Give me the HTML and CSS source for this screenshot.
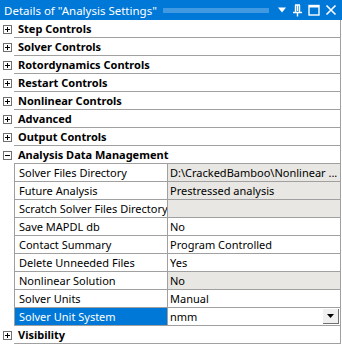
FILE: index.html
```html
<!DOCTYPE html>
<html>
<head>
<meta charset="utf-8">
<link rel="stylesheet" href="styles.css">
</head>
<body>
<div class="panel">
  <div class="titlebar">
    <span class="title">Details of "Analysis Settings"</span>
    <span class="grip"></span>
    <span class="tb-icons">
      <svg width="10" height="6" viewBox="0 0 10 6"><path d="M1 0.5h8l-4 5z" fill="#fff"/></svg>
      <svg width="11" height="13" viewBox="0 0 11 13"><path d="M3 1h5M3.5 1v7M7.5 1v7M5.5 1v6M1 8.5h9M5.5 8.5v4" stroke="#fff" stroke-width="1.4" fill="none"/></svg>
      <svg width="12" height="12" viewBox="0 0 12 12"><rect x="1" y="1.5" width="10" height="9.5" fill="none" stroke="#fff" stroke-width="1.4"/><path d="M1 2.5h10" stroke="#fff" stroke-width="2"/></svg>
      <svg width="12" height="12" viewBox="0 0 12 12"><path d="M1.5 1.5l9 9M10.5 1.5l-9 9" stroke="#fff" stroke-width="1.6"/></svg>
    </span>
  </div>
  <div class="grid">
    <div class="group"><span class="gut"><i class="box plus"></i></span><span class="gname">Step Controls</span></div>
    <div class="group"><span class="gut"><i class="box plus"></i></span><span class="gname">Solver Controls</span></div>
    <div class="group"><span class="gut"><i class="box plus"></i></span><span class="gname">Rotordynamics Controls</span></div>
    <div class="group"><span class="gut"><i class="box plus"></i></span><span class="gname">Restart Controls</span></div>
    <div class="group"><span class="gut"><i class="box plus"></i></span><span class="gname">Nonlinear Controls</span></div>
    <div class="group"><span class="gut"><i class="box plus"></i></span><span class="gname">Advanced</span></div>
    <div class="group"><span class="gut"><i class="box plus"></i></span><span class="gname">Output Controls</span></div>
    <div class="group"><span class="gut"><i class="box minus"></i></span><span class="gname">Analysis Data Management</span></div>
    <div class="row"><span class="gut"></span><span class="lab">Solver Files Directory</span><span class="val ro">D:\CrackedBamboo\Nonlinear ...</span></div>
    <div class="row"><span class="gut"></span><span class="lab">Future Analysis</span><span class="val ro">Prestressed analysis</span></div>
    <div class="row"><span class="gut"></span><span class="lab">Scratch Solver Files Directory</span><span class="val ro"></span></div>
    <div class="row"><span class="gut"></span><span class="lab">Save MAPDL db</span><span class="val">No</span></div>
    <div class="row"><span class="gut"></span><span class="lab">Contact Summary</span><span class="val">Program Controlled</span></div>
    <div class="row"><span class="gut"></span><span class="lab">Delete Unneeded Files</span><span class="val">Yes</span></div>
    <div class="row"><span class="gut"></span><span class="lab">Nonlinear Solution</span><span class="val ro">No</span></div>
    <div class="row"><span class="gut"></span><span class="lab">Solver Units</span><span class="val">Manual</span></div>
    <div class="row"><span class="gut"></span><span class="lab sel">Solver Unit System</span><span class="val combo"><span class="ctext">nmm</span><span class="dd"><svg width="7" height="4" viewBox="0 0 7 4"><path d="M0 0h7l-3.5 4z" fill="#000"/></svg></span></span></div>
    <div class="group"><span class="gut"><i class="box plus"></i></span><span class="gname">Visibility</span></div>
  </div>
</div>
</body>
</html>
```
FILE: styles.css
```css
* { box-sizing: border-box; }
html, body { margin: 0; padding: 0; background: #fff; }
body { font-family: "Segoe UI", "Noto Sans", "Open Sans", sans-serif; font-size: 11px; color: #000; }
.panel { width: 342px; height: 347px; background: #fff; }
.titlebar {
  height: 20px; background: #0078d7; color: #fff;
  display: flex; align-items: center; padding-left: 4px; padding-right: 5px;
}
.title { font-size: 11.5px; white-space: nowrap; }
.grip {
  flex: 1; height: 5px; margin: 0 8px 0 6px;
  background-image: radial-gradient(circle, rgba(255,255,255,0.55) 0.6px, transparent 0.8px);
  background-size: 2px 2px;
}
.tb-icons { display: flex; align-items: center; gap: 5px; }
.grid { display: flex; flex-direction: column; border-right: 1px solid #a0a0a0; width: 341px; }
.group, .row { display: grid; grid-template-columns: 14px 154px 1fr; height: 18px; }
.gut { display: flex; align-items: center; justify-content: center; background: #fff; }
.box { display: block; width: 9px; height: 9px; border: 1px solid #707070; position: relative; background: #fff; }
.box::before { content: ""; position: absolute; left: 1px; top: 3px; width: 5px; height: 1px; background: #000; }
.plus::after { content: ""; position: absolute; left: 3px; top: 1px; width: 1px; height: 5px; background: #000; }
.gname {
  grid-column: 2 / 4; font-weight: bold; padding-left: 4px; line-height: 17px;
  border-bottom: 1px solid #a0a0a0; white-space: nowrap;
}
.lab {
  border-left: 1px solid #a0a0a0; border-right: 1px solid #a0a0a0; border-bottom: 1px solid #a0a0a0;
  padding-left: 4px; line-height: 17px; white-space: nowrap; overflow: hidden;
}
.lab.sel { background: #0078d7; color: #fff; }
.val { border-bottom: 1px solid #a0a0a0; padding-left: 2px; line-height: 17px; white-space: nowrap; overflow: hidden; }
.val.ro { background: #e8e7e3; }
.combo { display: flex; align-items: stretch; padding-right: 1px; }
.ctext { flex: 1; }
.dd {
  width: 16px; margin: 1px 0 1px 0; background: #f0f0f0;
  border-right: 1px solid #707070; border-bottom: 1px solid #707070;
  display: flex; align-items: center; justify-content: center;
}
```
